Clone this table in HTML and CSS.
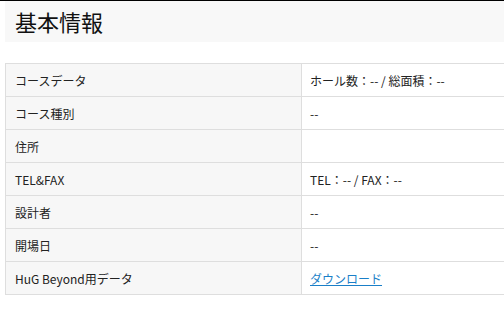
FILE: index.html
```html
<!DOCTYPE html>
<html lang="ja">
<head>
<meta charset="utf-8">
<title>基本情報</title>
<link rel="stylesheet" href="styles.css">
</head>
<body>
<div class="page">
  <h2 class="section-title">基本情報</h2>
  <table class="info-table">
    <tr><th>コースデータ</th><td>ホール数：-- / 総面積：--</td></tr>
    <tr><th>コース種別</th><td>--</td></tr>
    <tr><th>住所</th><td></td></tr>
    <tr><th>TEL&amp;FAX</th><td>TEL：-- / FAX：--</td></tr>
    <tr><th>設計者</th><td>--</td></tr>
    <tr><th>開場日</th><td>--</td></tr>
    <tr><th>HuG Beyond用データ</th><td><a class="dl-link" href="#">ダウンロード</a></td></tr>
  </table>
</div>
</body>
</html>
```
FILE: styles.css
```css
body {
  margin: 0;
  border-top: 1px solid #000;
  font-family: "Noto Sans CJK JP", "Noto Sans", sans-serif;
  color: #222;
  background: #fff;
}
.page {
  padding-left: 5px;
}
.section-title {
  margin: 0;
  height: 41px;
  padding: 0 10px;
  background: #f8f8f8;
  font-size: 22px;
  font-weight: normal;
  line-height: 40px;
  color: #111;
}
.info-table {
  margin-top: 21px;
  width: 100%;
  border-collapse: collapse;
  font-size: 12px;
}
.info-table th,
.info-table td {
  height: 32px;
  padding: 0 8px;
  border: 1px solid #dedede;
  text-align: left;
  font-weight: normal;
  vertical-align: middle;
}
.info-table th {
  width: 278px;
  padding-left: 9px;
  background: #f7f7f7;
}
.info-table td {
  background: #fff;
  border-right: none;
}
.dl-link {
  color: #1a7fc8;
  text-decoration: underline;
}
```
